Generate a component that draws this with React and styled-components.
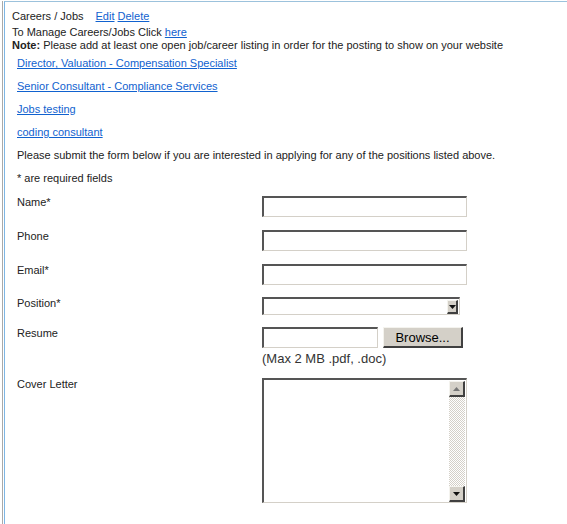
import React from "react";
import styled, { createGlobalStyle } from "styled-components";

const GlobalStyle = createGlobalStyle`
  html, body {
    margin: 0;
    padding: 0;
    background: #fff;
  }
  body {
    font-family: "Liberation Sans", Arial, sans-serif;
    font-size: 11px;
    color: #222;
  }
`;

const Frame = styled.div`
  margin-left: 2px;
  border-left: 1px solid #a9a9a9;
  min-height: 524px;
  box-sizing: border-box;
`;

const Panel = styled.div`
  margin-left: 1px;
  margin-top: 1px;
  border-top: 1px solid #9cc2dc;
  border-left: 1px solid #7db6e4;
  min-height: 523px;
  box-sizing: border-box;
  padding: 8px 0 0 7px;
`;

const Line = styled.div`
  line-height: 13px;
  margin-bottom: ${p => p.mb || 0}px;
`;

const Title = styled.span`
  margin-right: 12px;
`;

const Link = styled.a`
  color: #1162cf;
  text-decoration: underline;
  cursor: pointer;
`;

const Body = styled.div`
  padding: 5px 0 0 5px;
`;

const JobLink = styled(Link)`
  display: block;
  line-height: 13px;
  margin-bottom: 10px;
  width: fit-content;
`;

const Para = styled.p`
  margin: 0 0 ${p => p.mb || 10}px;
  line-height: 13px;
`;

const Row = styled.div`
  display: grid;
  grid-template-columns: 245px 1fr;
  margin-bottom: ${p => p.mb}px;
`;

const Label = styled.div`
  line-height: 13px;
`;

const Field = styled.div`
  display: flex;
  flex-direction: column;
  align-items: flex-start;
`;

const inset = `
  box-sizing: border-box;
  background: #fff;
  border-style: solid;
  border-width: 2px 1px 1px 2px;
  border-color: #555 #d4d0c8 #d4d0c8 #555;
`;

const TextBox = styled.div`
  ${inset}
  width: ${p => p.w}px;
  height: ${p => p.h}px;
`;

const SelectBox = styled.div`
  ${inset}
  width: 198px;
  height: 18px;
  display: flex;
  justify-content: flex-end;
  align-items: flex-start;
  padding: 1px 1px 0 0;
`;

const bevel = `
  box-sizing: border-box;
  background: #d4d0c8;
  border-style: solid;
  border-width: 1px 2px 2px 1px;
  border-color: #f4f3ee #404040 #404040 #f4f3ee;
  display: flex;
  align-items: center;
  justify-content: center;
`;

const ArrowButton = styled.div`
  ${bevel}
  width: ${p => p.w || 11}px;
  height: ${p => p.h || 14}px;
`;

const FileRow = styled.div`
  display: flex;
  gap: 5px;
  margin-bottom: 3px;
`;

const Browse = styled.div`
  ${bevel}
  width: 80px;
  height: 21px;
  font-size: 13px;
  color: #000;
`;

const Hint = styled.div`
  font-size: 13px;
  line-height: 15px;
  color: #333;
`;

const TextArea = styled.div`
  ${inset}
  width: 205px;
  height: 125px;
  display: flex;
  justify-content: flex-end;
  padding: 1px 1px 0 0;
`;

const Scrollbar = styled.div`
  width: 16px;
  display: flex;
  flex-direction: column;
  justify-content: space-between;
  background-color: #eceae4;
  background-image: repeating-conic-gradient(#fff 0 25%, #d4d0c8 0 50%);
  background-size: 2px 2px;
`;

const Arrow = ({ up }) => (
  <svg width="7" height="4" viewBox="0 0 7 4">
    <path d={up ? "M0 4 L3.5 0 L7 4 Z" : "M0 0 L7 0 L3.5 4 Z"} fill={up ? "#777" : "#111"} />
  </svg>
);

const jobs = [
  "Director, Valuation - Compensation Specialist",
  "Senior Consultant - Compliance Services",
  "Jobs testing",
  "coding consultant",
];

export default function App() {
  return (
    <>
      <GlobalStyle />
      <Frame>
        <Panel>
          <Line mb={3}>
            <Title>Careers / Jobs</Title>
            <Link>Edit</Link> <Link>Delete</Link>
          </Line>
          <Line>
            To Manage Careers/Jobs Click <Link>here</Link>
          </Line>
          <Line>
            <b>Note:</b> Please add at least one open job/career listing in order for the posting to show on your website
          </Line>
          <Body>
            {jobs.map(j => (
              <JobLink key={j}>{j}</JobLink>
            ))}
            <Para>Please submit the form below if you are interested in applying for any of the positions listed above.</Para>
            <Para mb={11}>* are required fields</Para>
            <Row mb={13}>
              <Label>Name*</Label>
              <TextBox w={205} h={21} />
            </Row>
            <Row mb={13}>
              <Label>Phone</Label>
              <TextBox w={205} h={21} />
            </Row>
            <Row mb={12}>
              <Label>Email*</Label>
              <TextBox w={205} h={21} />
            </Row>
            <Row mb={12}>
              <Label>Position*</Label>
              <SelectBox>
                <ArrowButton>
                  <Arrow />
                </ArrowButton>
              </SelectBox>
            </Row>
            <Row mb={12}>
              <Label>Resume</Label>
              <Field>
                <FileRow>
                  <TextBox w={116} h={21} />
                  <Browse>Browse...</Browse>
                </FileRow>
                <Hint>(Max 2 MB .pdf, .doc)</Hint>
              </Field>
            </Row>
            <Row mb={0}>
              <Label>Cover Letter</Label>
              <TextArea>
                <Scrollbar>
                  <ArrowButton w={16} h={16}>
                    <Arrow up />
                  </ArrowButton>
                  <ArrowButton w={16} h={16}>
                    <Arrow />
                  </ArrowButton>
                </Scrollbar>
              </TextArea>
            </Row>
          </Body>
        </Panel>
      </Frame>
    </>
  );
}
